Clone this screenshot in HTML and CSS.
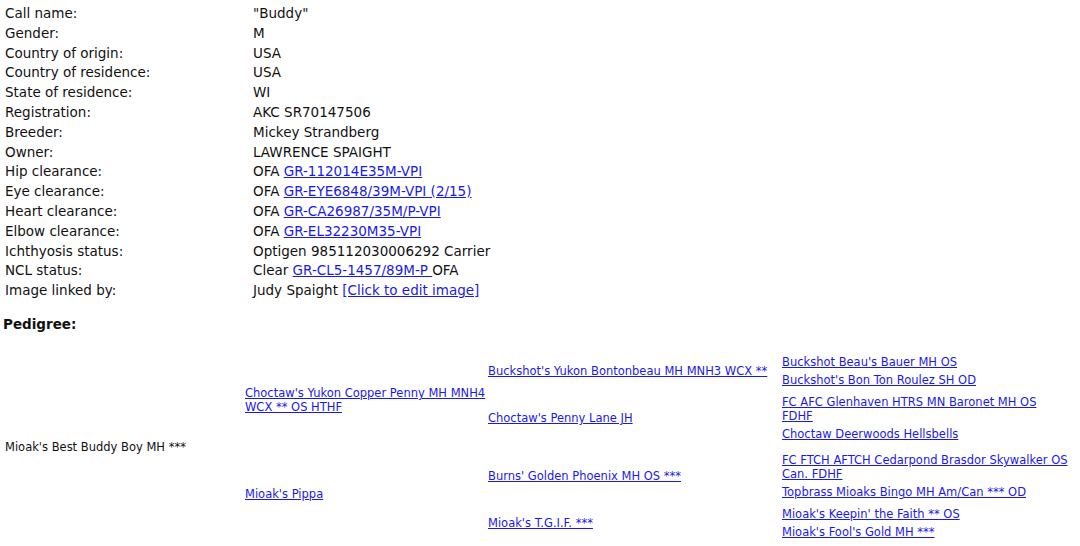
FILE: index.html
```html
<!DOCTYPE html>
<html>
<head>
<meta charset="utf-8">
<link rel="stylesheet" href="styles.css">
</head>
<body>
<div class="info">
  <div class="label">Call name:</div><div class="value">"Buddy"</div>
  <div class="label">Gender:</div><div class="value">M</div>
  <div class="label">Country of origin:</div><div class="value">USA</div>
  <div class="label">Country of residence:</div><div class="value">USA</div>
  <div class="label">State of residence:</div><div class="value">WI</div>
  <div class="label">Registration:</div><div class="value">AKC SR70147506</div>
  <div class="label">Breeder:</div><div class="value">Mickey Strandberg</div>
  <div class="label">Owner:</div><div class="value">LAWRENCE SPAIGHT</div>
  <div class="label">Hip clearance:</div><div class="value">OFA <a href="#">GR-112014E35M-VPI</a></div>
  <div class="label">Eye clearance:</div><div class="value">OFA <a href="#">GR-EYE6848/39M-VPI (2/15)</a></div>
  <div class="label">Heart clearance:</div><div class="value">OFA <a href="#">GR-CA26987/35M/P-VPI</a></div>
  <div class="label">Elbow clearance:</div><div class="value">OFA <a href="#">GR-EL32230M35-VPI</a></div>
  <div class="label">Ichthyosis status:</div><div class="value">Optigen 985112030006292 Carrier</div>
  <div class="label">NCL status:</div><div class="value">Clear <a href="#">GR-CL5-1457/89M-P </a>OFA</div>
  <div class="label">Image linked by:</div><div class="value">Judy Spaight <a href="#">[Click to edit image]</a></div>
</div>
<h3 class="heading">Pedigree:</h3>
<table class="pedigree">
  <colgroup>
    <col class="c1"><col class="c2"><col class="c3"><col class="c4">
  </colgroup>
  <tr class="ra">
    <td rowspan="4" class="self">Mioak's Best Buddy Boy MH ***</td>
    <td rowspan="2" class="parent"><a href="#">Choctaw's Yukon Copper Penny MH MNH4 WCX ** OS HTHF</a></td>
    <td><a href="#">Buckshot's Yukon Bontonbeau MH MNH3 WCX **</a></td>
    <td><a class="entry" href="#">Buckshot Beau's Bauer MH OS</a><a class="entry" href="#">Buckshot's Bon Ton Roulez SH OD</a></td>
  </tr>
  <tr class="rb">
    <td><a href="#">Choctaw's Penny Lane JH</a></td>
    <td><a class="entry" href="#">FC AFC Glenhaven HTRS MN Baronet MH OS FDHF</a><a class="entry" href="#">Choctaw Deerwoods Hellsbells</a></td>
  </tr>
  <tr class="rc">
    <td rowspan="2" class="parent"><a href="#">Mioak's Pippa</a></td>
    <td><a href="#">Burns' Golden Phoenix MH OS ***</a></td>
    <td><a class="entry" href="#">FC FTCH AFTCH Cedarpond Brasdor Skywalker OS Can. FDHF</a><a class="entry" href="#">Topbrass Mioaks Bingo MH Am/Can *** OD</a></td>
  </tr>
  <tr class="rd">
    <td><a href="#">Mioak's T.G.I.F. ***</a></td>
    <td><a class="entry" href="#">Mioak's Keepin' the Faith ** OS</a><a class="entry" href="#">Mioak's Fool's Gold MH ***</a></td>
  </tr>
</table>
</body>
</html>
```

FILE: styles.css
```css
html, body {
  margin: 0;
  padding: 0;
  background: #ffffff;
}
body {
  padding-top: 4px;
  font-family: "DejaVu Sans", Verdana, sans-serif;
  font-size: 13.5px;
  color: #111;
}
a {
  color: #1a1ae6;
  text-decoration: underline;
}
.info {
  display: grid;
  grid-template-columns: 248px 1fr;
  line-height: 19.8px;
  padding-left: 5px;
}
.heading {
  margin: 13px 0 0 0;
  padding-left: 3px;
  font-size: 13.5px;
  font-weight: bold;
  line-height: 20px;
}
.pedigree {
  margin-top: 19.5px;
  margin-left: 3px;
  border-collapse: collapse;
  border-spacing: 0;
  width: 1072px;
  table-layout: fixed;
  font-size: 11.5px;
  line-height: 14px;
}
.pedigree td {
  padding: 0 2px;
  vertical-align: middle;
}
.pedigree td.parent {
  padding-right: 0;
}
.c1 { width: 240px; }
.c2 { width: 243px; }
.c3 { width: 294px; }
.c4 { width: 295px; }
.ra { height: 35px; }
.rb { height: 58px; }
.rc { height: 58px; }
.rd { height: 34px; }
.entry {
  display: block;
  width: max-content;
  max-width: 286px;
  padding: 2px 0;
}
```
